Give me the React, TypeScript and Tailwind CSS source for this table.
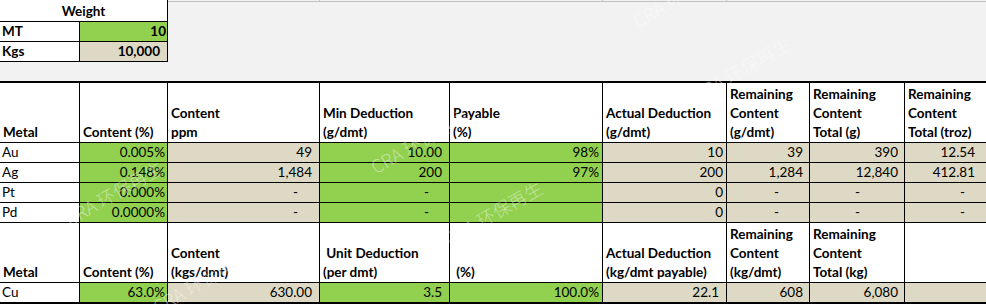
import React from "react";

const G = "bg-[#92d050]";
const T = "bg-[#ddd9c4]";
const W = "bg-white";

type Cell = { v: string; bg: string; pr?: string };

const H = ({ lines, cls = "" }: { lines: string[]; cls?: string }) => (
  <div className={`bg-white flex flex-col justify-end pl-[3px] font-bold whitespace-pre overflow-visible ${cls}`}>
    {lines.map((l, i) => (
      <div key={i} className="leading-[19px] h-[19px] shrink-0">
        {l}
      </div>
    ))}
  </div>
);

const D = ({ c, first }: { c: Cell; first?: boolean }) => (
  <div
    className={`${c.bg} flex items-center h-[19px] leading-[19px] whitespace-pre ${
      first ? "justify-start pl-[2px]" : "justify-end"
    } ${c.pr ?? ""}`}
  >
    {c.v}
  </div>
);

const header1: string[][] = [
  ["Metal"],
  ["Content (%)"],
  ["Content", "ppm"],
  ["Min Deduction", "(g/dmt)"],
  ["Payable", "(%)"],
  ["Actual Deduction", "(g/dmt)"],
  ["Remaining", "Content", "(g/dmt)"],
  ["Remaining", "Content", "Total (g)"],
  ["Remaining", "Content", "Total (troz)"],
];

const header2: string[][] = [
  ["Metal"],
  ["Content (%)"],
  ["Content", "(kgs/dmt)"],
  [" Unit Deduction", "(per dmt)"],
  [" (%)"],
  ["Actual Deduction", "(kg/dmt payable)"],
  ["Remaining", "Content", "(kg/dmt)"],
  ["Remaining", "Content", "Total (kg)"],
  [""],
];

const rows: Cell[][] = [
  [
    { v: "Au", bg: W },
    { v: "0.005%", bg: G, pr: "pr-[2px]" },
    { v: "49", bg: T, pr: "pr-[7px]" },
    { v: "10.00", bg: G, pr: "pr-[7px]" },
    { v: "98%", bg: G, pr: "pr-[3px]" },
    { v: "10", bg: T, pr: "pr-[3px]" },
    { v: "39", bg: T, pr: "pr-[6px]" },
    { v: "390", bg: T, pr: "pr-[6px]" },
    { v: "12.54", bg: T, pr: "pr-[11px]" },
  ],
  [
    { v: "Ag", bg: W },
    { v: "0.148%", bg: G, pr: "pr-[2px]" },
    { v: "1,484", bg: T, pr: "pr-[7px]" },
    { v: "200", bg: G, pr: "pr-[7px]" },
    { v: "97%", bg: G, pr: "pr-[3px]" },
    { v: "200", bg: T, pr: "pr-[3px]" },
    { v: "1,284", bg: T, pr: "pr-[6px]" },
    { v: "12,840", bg: T, pr: "pr-[6px]" },
    { v: "412.81", bg: T, pr: "pr-[11px]" },
  ],
  [
    { v: "Pt", bg: W },
    { v: "0.000%", bg: G, pr: "pr-[2px]" },
    { v: "-", bg: T, pr: "pr-[21px]" },
    { v: "-", bg: G, pr: "pr-[20px]" },
    { v: "", bg: G },
    { v: "0", bg: T, pr: "pr-[3px]" },
    { v: "-", bg: T, pr: "pr-[30px]" },
    { v: "-", bg: T, pr: "pr-[44px]" },
    { v: "-", bg: T, pr: "pr-[21px]" },
  ],
  [
    { v: "Pd", bg: W },
    { v: "0.0000%", bg: G, pr: "pr-[2px]" },
    { v: "-", bg: T, pr: "pr-[21px]" },
    { v: "-", bg: G, pr: "pr-[20px]" },
    { v: "", bg: G },
    { v: "0", bg: T, pr: "pr-[3px]" },
    { v: "-", bg: T, pr: "pr-[30px]" },
    { v: "-", bg: T, pr: "pr-[44px]" },
    { v: "-", bg: T, pr: "pr-[21px]" },
  ],
];

const cuRow: Cell[] = [
  { v: "Cu", bg: W },
  { v: "63.0%", bg: G, pr: "pr-[2px]" },
  { v: "630.00", bg: T, pr: "pr-[7px]" },
  { v: "3.5", bg: G, pr: "pr-[7px]" },
  { v: "100.0%", bg: G, pr: "pr-[3px]" },
  { v: "22.1", bg: T, pr: "pr-[7px]" },
  { v: "608", bg: T, pr: "pr-[6px]" },
  { v: "6,080", bg: T, pr: "pr-[6px]" },
  { v: "", bg: T },
];

const marks = [
  "left-[640px] top-[8px]",
  "left-[700px] top-[82px]",
  "left-[378px] top-[154px]",
  "left-[452px] top-[226px]",
  "left-[72px] top-[206px]",
  "left-[160px] top-[294px]",
];

export default function App() {
  return (
    <div className="relative w-[986px] h-[305px] overflow-hidden bg-white text-black text-[13.5px] font-['Lato','Liberation_Sans',sans-serif]">
      {/* top area with weight table */}
      <div className="h-[81px] bg-[#f2f2f2] flex items-start">
        <div className="w-[168px] border-r border-b border-black bg-black grid grid-cols-[79px_87px] grid-rows-[21px_19px_19px] gap-px">
          <div className="col-span-2 bg-white flex items-center justify-center font-bold leading-[21px] pt-px">
            Weight
          </div>
          <div className="bg-white font-bold pl-[2px] leading-[19px]">MT</div>
          <div className="bg-[#92d050] font-bold text-right pr-[1px] leading-[19px]">10</div>
          <div className="bg-white font-bold pl-[2px] leading-[19px]">Kgs</div>
          <div className="bg-[#ddd9c4] font-bold text-right pr-[7px] leading-[19px]">10,000</div>
        </div>
        <div className="flex-1 flex flex-col">
          <div className="flex h-px">
            <div className="w-[151px]" />
            <div className="w-px bg-[#c8c8c8]" />
            <div className="w-[282px]" />
            <div className="w-px bg-[#c8c8c8]" />
            <div className="w-[123px]" />
            <div className="w-px bg-[#c8c8c8]" />
          </div>
          <div className="h-px bg-[#c0c0c0]" />
        </div>
      </div>

      {/* main table */}
      <div className="border-t-2 border-b-2 border-black bg-black grid grid-cols-[79px_87px_151px_129px_152px_123px_82px_94px_81px] grid-rows-[59px_19px_19px_19px_19px_59px_19px] gap-px">
        {header1.map((l, i) => (
          <H key={`h1-${i}`} lines={l} />
        ))}
        {rows.map((r, ri) =>
          r.map((c, ci) => <D key={`r${ri}-${ci}`} c={c} first={ci === 0} />)
        )}
        {header2.map((l, i) => (
          <H key={`h2-${i}`} lines={l} />
        ))}
        {cuRow.map((c, ci) => (
          <D key={`cu-${ci}`} c={c} first={ci === 0} />
        ))}
      </div>

      {/* watermarks */}
      {marks.map((m, i) => (
        <div
          key={i}
          className={`absolute ${m} pointer-events-none select-none whitespace-nowrap text-[18px] leading-[24px] font-light text-white/45 -rotate-[30deg] origin-bottom-left font-['Noto_Sans_CJK_SC',sans-serif]`}
        >
          CRA 环保再生
        </div>
      ))}
    </div>
  );
}
